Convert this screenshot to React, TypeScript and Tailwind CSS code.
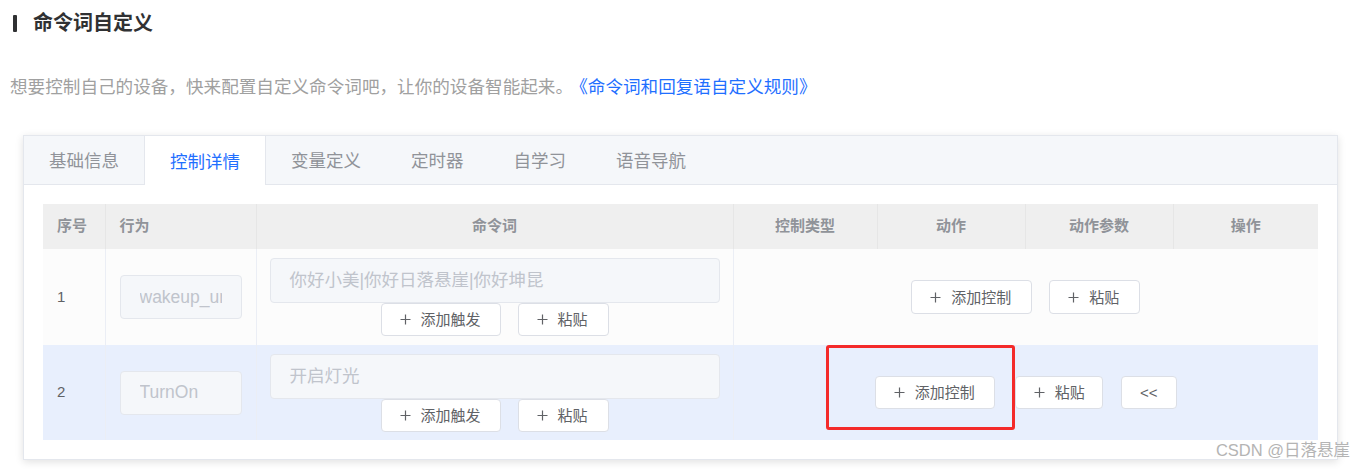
import React from "react";

type Col = { key: string; title: string; width: number; align: "left" | "center" };

const columns: Col[] = [
  { key: "idx", title: "序号", width: 62, align: "left" },
  { key: "action", title: "行为", width: 151, align: "left" },
  { key: "words", title: "命令词", width: 477, align: "center" },
  { key: "ctype", title: "控制类型", width: 144, align: "center" },
  { key: "act", title: "动作", width: 148, align: "center" },
  { key: "params", title: "动作参数", width: 148, align: "center" },
  { key: "ops", title: "操作", width: 145, align: "center" },
];

const tabs = ["基础信息", "控制详情", "变量定义", "定时器", "自学习", "语音导航"];

const rows = [
  { id: 1, behavior: "wakeup_url", words: "你好小美|你好日落悬崖|你好坤昆", selected: false },
  { id: 2, behavior: "TurnOn", words: "开启灯光", selected: true },
];

function PlusIcon() {
  return (
    <svg width="11" height="11" viewBox="0 0 11 11" className="shrink-0" aria-hidden>
      <path d="M5.5 0.5v10M0.5 5.5h10" stroke="#606266" strokeWidth="1.2" fill="none" />
    </svg>
  );
}

function Btn({ label, plus = true, className = "" }: { label: string; plus?: boolean; className?: string }) {
  return (
    <button
      type="button"
      className={
        "h-[33px] px-[18px] flex items-center gap-[10px] rounded-[4px] border border-[#dcdfe6] bg-white text-[15px] leading-none text-[#606266] whitespace-nowrap " +
        className
      }
    >
      {plus && <PlusIcon />}
      <span>{label}</span>
    </button>
  );
}

function Field({ value, height, clip }: { value: string; height: string; clip?: boolean }) {
  return (
    <div
      className={
        "flex items-center rounded-[4px] border border-[#e4e7ed] bg-[#f5f7fa] px-[19px] overflow-hidden whitespace-nowrap text-[17.5px] text-[#c0c4cc] " +
        height
      }
    >
      <span className={clip ? "block w-[83px] overflow-hidden" : ""}>{value}</span>
    </div>
  );
}

export default function App() {
  return (
    <div className="relative w-[1364px] h-[469px] bg-white overflow-hidden font-['Liberation_Sans','Noto_Sans_CJK_SC',sans-serif]">
      {/* section title */}
      <div className="flex items-center h-[46px] pl-[13px]">
        <span className="w-[4px] h-[17px] rounded-[1px] bg-[#303133]" />
        <h2 className="ml-[16px] text-[20px] font-bold leading-none text-[#303133]">命令词自定义</h2>
      </div>

      <p className="mt-[28px] pl-[10px] text-[17.6px] leading-[26px] text-[#a0a0a0]">
        想要控制自己的设备，快来配置自定义命令词吧，让你的设备智能起来。
        <a className="ml-[6px] text-[#1f6fff]">《命令词和回复语自定义规则》</a>
      </p>

      {/* card */}
      <div className="ml-[23px] mt-[35px] w-[1315px] border border-[#e4e7ed] bg-white shadow-[0_2px_8px_rgba(0,0,0,0.12)]">
        <div className="flex h-[49px] bg-[#f5f7fa] border-b border-[#e4e7ed]">
          {tabs.map((t, i) => (
            <div
              key={t}
              className={
                "flex items-center px-[25px] pt-[4px] text-[17.5px] leading-none " +
                (i === 1
                  ? "bg-white text-[#1f6fff] border-x border-[#e4e7ed] h-[49px]"
                  : "text-[#909399]")
              }
            >
              {t}
            </div>
          ))}
        </div>

        <div className="p-[19px]">
          <table className="table-fixed border-collapse w-[1275px]">
            <colgroup>
              {columns.map((c) => (
                <col key={c.key} style={{ width: c.width }} />
              ))}
            </colgroup>
            <thead>
              <tr className="h-[45px] bg-[#efefef]">
                {columns.map((c) => (
                  <th
                    key={c.key}
                    className={
                      "border-r border-[#e6e6e6] last:border-r-0 text-[15px] font-bold text-[#909399] " +
                      (c.align === "left" ? "text-left pl-[14px]" : "text-center")
                    }
                  >
                    {c.title}
                  </th>
                ))}
              </tr>
            </thead>
            <tbody>
              {rows.map((r) => (
                <tr
                  key={r.id}
                  className={r.selected ? "h-[95px] bg-[#e8effd]" : "h-[96px] bg-[#fcfcfc]"}
                >
                  <td className="pl-[14px] text-[15px] text-[#606266] border-r border-[#ebeef5]">{r.id}</td>
                  <td className="px-[14px] border-r border-[#ebeef5]">
                    <Field value={r.behavior} height="h-[44px]" clip />
                  </td>
                  <td className="px-[13px] border-r border-[#ebeef5]">
                    <div className="flex flex-col">
                      <Field value={r.words} height="h-[45px]" />
                      <div className="flex justify-center gap-[17px]">
                        <Btn label="添加触发" className="w-[120px]" />
                        <Btn label="粘贴" className="w-[91px]" />
                      </div>
                    </div>
                  </td>
                  <td colSpan={4}>
                    {r.selected ? (
                      <div className="flex items-center justify-center">
                        <div className="relative">
                          <Btn label="添加控制" className="w-[120px]" />
                          <div className="absolute left-[-49px] top-[-31px] w-[189px] h-[85px] rounded-[3px] border-[3px] border-[#f42a2a]" />
                        </div>
                        <Btn label="粘贴" className="ml-[20px] w-[88px]" />
                        <Btn label="<<" plus={false} className="ml-[18px] w-[56px] justify-center" />
                      </div>
                    ) : (
                      <div className="flex items-center justify-center gap-[17px] h-[34px]">
                        <Btn label="添加控制" className="w-[121px] h-[34px]" />
                        <Btn label="粘贴" className="w-[91px] h-[34px]" />
                      </div>
                    )}
                  </td>
                </tr>
              ))}
            </tbody>
          </table>
        </div>
      </div>

      <span className="absolute right-[14px] top-[439px] text-[16.5px] leading-[22px] text-[#b4b4b4]">
        CSDN @日落悬崖
      </span>
    </div>
  );
}
